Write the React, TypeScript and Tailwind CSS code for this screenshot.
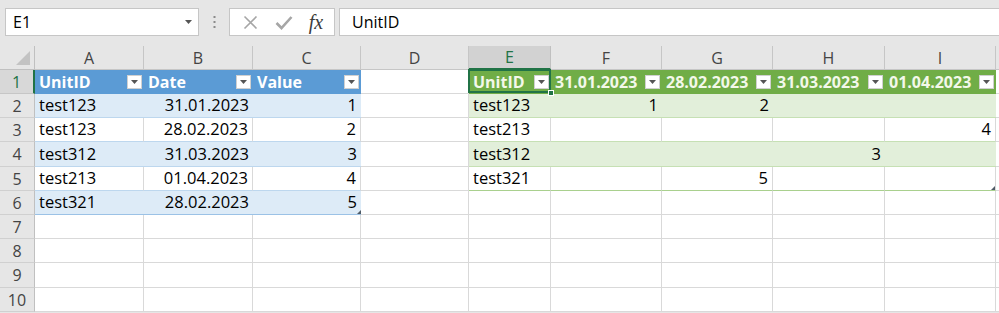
import React from "react";

type Kind =
  | "plain"
  | "bh"
  | "bb"
  | "bw"
  | "bbLast"
  | "gh"
  | "gb"
  | "gw"
  | "gwLast";

type Cell = { t?: string; k: Kind; r?: boolean; handle?: boolean; sel?: boolean };

const cls: Record<Kind, string> = {
  plain: "bg-white border-r border-b border-[#d9d9d9]",
  bh: "bg-[#5b9bd5] border-b border-[#5b9bd5] text-white font-bold",
  bb: "bg-[#ddebf7] border-b border-[#bdd7ee]",
  bw: "bg-white border-r border-b border-r-[#d9d9d9] border-b-[#bdd7ee]",
  bbLast: "bg-[#ddebf7] border-b border-[#9bc2e6]",
  gh: "bg-[#70ad47] border-b border-[#70ad47] text-[#f3f8ea] font-bold",
  gb: "bg-[#e2efda] border-b border-[#c6e0b4]",
  gw: "bg-white border-r border-b border-r-[#d9d9d9] border-b-[#c6e0b4]",
  gwLast: "bg-white border-r border-b border-r-[#d9d9d9] border-b-[#a9d08e]",
};

const P: Cell = { k: "plain" };

const rows: Cell[][] = [
  [
    { t: "UnitID", k: "bh" },
    { t: "Date", k: "bh" },
    { t: "Value", k: "bh" },
    P,
    { t: "UnitID", k: "gh", sel: true },
    { t: "31.01.2023", k: "gh" },
    { t: "28.02.2023", k: "gh" },
    { t: "31.03.2023", k: "gh" },
    { t: "01.04.2023", k: "gh" },
  ],
  [
    { t: "test123", k: "bb" },
    { t: "31.01.2023", k: "bb", r: true },
    { t: "1", k: "bb", r: true },
    P,
    { t: "test123", k: "gb" },
    { t: "1", k: "gb", r: true },
    { t: "2", k: "gb", r: true },
    { k: "gb" },
    { k: "gb" },
  ],
  [
    { t: "test123", k: "bw" },
    { t: "28.02.2023", k: "bw", r: true },
    { t: "2", k: "bw", r: true },
    P,
    { t: "test213", k: "gw" },
    { k: "gw" },
    { k: "gw" },
    { k: "gw" },
    { t: "4", k: "gw", r: true },
  ],
  [
    { t: "test312", k: "bb" },
    { t: "31.03.2023", k: "bb", r: true },
    { t: "3", k: "bb", r: true },
    P,
    { t: "test312", k: "gb" },
    { k: "gb" },
    { k: "gb" },
    { t: "3", k: "gb", r: true },
    { k: "gb" },
  ],
  [
    { t: "test213", k: "bw" },
    { t: "01.04.2023", k: "bw", r: true },
    { t: "4", k: "bw", r: true },
    P,
    { t: "test321", k: "gwLast" },
    { k: "gwLast" },
    { t: "5", k: "gwLast", r: true },
    { k: "gwLast" },
    { k: "gwLast", handle: true },
  ],
  [
    { t: "test321", k: "bbLast" },
    { t: "28.02.2023", k: "bbLast", r: true },
    { t: "5", k: "bbLast", r: true, handle: true },
    P,
    P,
    P,
    P,
    P,
    P,
  ],
  [P, P, P, P, P, P, P, P, P],
  [P, P, P, P, P, P, P, P, P],
  [P, P, P, P, P, P, P, P, P],
  [P, P, P, P, P, P, P, P, P],
];

const cols = ["A", "B", "C", "D", "E", "F", "G", "H", "I"];

function FilterBtn() {
  return (
    <span className="absolute right-[2px] top-[5px] w-[15px] h-[14px] bg-white border border-[#d0d0d0] flex items-center justify-center">
      <svg width="7" height="4" viewBox="0 0 7 4">
        <path d="M0 0 L7 0 L3.5 4 Z" fill="#555" />
      </svg>
    </span>
  );
}

function SheetCell({ c }: { c: Cell }) {
  const header = c.k === "bh" || c.k === "gh";
  return (
    <div
      className={`relative flex items-center px-[4px] text-[16.5px] leading-none whitespace-nowrap ${
        c.r ? "justify-end" : "justify-start"
      } ${header ? "" : "text-black"} ${cls[c.k]}`}
    >
      <span className={header ? "text-[16px]" : ""}>{c.t ?? ""}</span>
      {header && <FilterBtn />}
      {c.handle && (
        <svg className="absolute right-0 bottom-0" width="4" height="4" viewBox="0 0 4 4">
          <path d="M4 0 L4 4 L0 4 Z" fill="#4f5b66" />
        </svg>
      )}
      {c.sel && (
        <>
          <span className="absolute -left-px -top-px right-0 bottom-0 border-2 border-[#217346] z-10" />
          <span className="absolute -right-[3px] -bottom-[3px] w-[6px] h-[6px] bg-[#217346] border border-white z-20" />
        </>
      )}
    </div>
  );
}

export default function App() {
  return (
    <div className="w-[999px] h-[313px] overflow-hidden bg-[#e6e6e6] font-['Open_Sans',sans-serif] text-black">
      {/* Toolbar */}
      <div className="h-[46px] flex items-start pt-[8px] pl-[5px]">
        <div className="w-[194px] h-[28px] bg-white border border-[#c6c6c6] flex items-center justify-between pl-[7px] pr-[6px]">
          <span className="text-[16px]">E1</span>
          <svg width="7" height="4" viewBox="0 0 7 4">
            <path d="M0 0 L7 0 L3.5 4 Z" fill="#555" />
          </svg>
        </div>
        <div className="w-[30px] h-[28px] flex items-center justify-center">
          <svg width="3" height="12" viewBox="0 0 3 12">
            <rect x="0.5" y="0" width="2" height="2" fill="#8a8a8a" />
            <rect x="0.5" y="5" width="2" height="2" fill="#8a8a8a" />
            <rect x="0.5" y="10" width="2" height="2" fill="#8a8a8a" />
          </svg>
        </div>
        <div className="w-[106px] h-[28px] bg-white border border-[#c6c6c6] flex items-center">
          <div className="w-[36px] flex justify-center pl-[4px]">
            <svg width="15" height="15" viewBox="0 0 15 15">
              <path d="M1.5 1.5 L13.5 13.5 M13.5 1.5 L1.5 13.5" stroke="#a6a6a6" strokeWidth="1.6" />
            </svg>
          </div>
          <div className="w-[36px] flex justify-center">
            <svg width="18" height="15" viewBox="0 0 18 15">
              <path d="M1.5 8 L6.5 13 L16.5 2" stroke="#a6a6a6" strokeWidth="2.6" fill="none" />
            </svg>
          </div>
          <div className="flex-1 flex justify-center pr-[4px]">
            <span className="font-['Liberation_Serif',serif] italic text-[20px] leading-none text-[#3c3c3c]">
              fx
            </span>
          </div>
        </div>
        <div className="ml-[4px] flex-1 h-[28px] bg-white border-y border-l border-[#c6c6c6] flex items-center pl-[12px]">
          <span className="text-[16px]">UnitID</span>
        </div>
      </div>

      {/* Sheet */}
      <div className="grid grid-cols-[35px_109px_109px_108px_108px_82px_111px_111px_112px_111px_1fr] grid-rows-[24px_24px_24px_24px_25px_24px_24px_24px_24px_25px_24px]">
        {/* corner */}
        <div className="relative bg-[#e6e6e6] border-r border-b border-[#c0c0c0]">
          <svg className="absolute right-[4px] bottom-[4px]" width="14" height="14" viewBox="0 0 14 14">
            <path d="M14 0 L14 14 L0 14 Z" fill="#c3c3c3" />
          </svg>
        </div>
        {cols.map((c) =>
          c === "E" ? (
            <div
              key={c}
              className="bg-[#d2d2d2] border-r border-[#c0c0c0] border-b-2 border-b-[#217346] flex items-center justify-center text-[16px] text-[#217346]"
            >
              {c}
            </div>
          ) : (
            <div
              key={c}
              className="bg-[#e6e6e6] border-r border-b border-[#c6c6c6] flex items-center justify-center text-[16px] text-[#444]"
            >
              {c}
            </div>
          )
        )}
        <div className="bg-[#e6e6e6] border-b border-[#c6c6c6]" />

        {rows.map((row, i) => (
          <React.Fragment key={i}>
            {i === 0 ? (
              <div className="bg-[#d8d8d8] border-b border-[#c6c6c6] border-r-2 border-r-[#217346] flex items-center justify-center text-[16px] text-[#217346]">
                {i + 1}
              </div>
            ) : (
              <div className="bg-[#e6e6e6] border-b border-[#d0d0d0] border-r border-r-[#c0c0c0] flex items-center justify-center text-[16px] text-[#444]">
                {i + 1}
              </div>
            )}
            {row.map((c, j) => (
              <SheetCell key={j} c={c} />
            ))}
            <div className="bg-white border-b border-[#d9d9d9]" />
          </React.Fragment>
        ))}
      </div>
    </div>
  );
}
